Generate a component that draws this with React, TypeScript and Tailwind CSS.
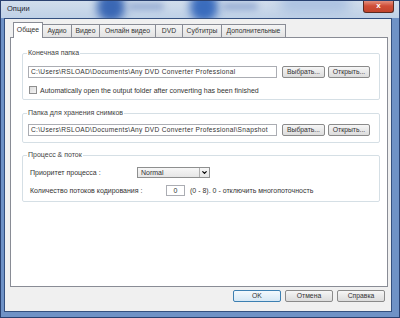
import { ChevronDown } from 'lucide-react';

const TABS = [
  { label: 'Общее', w: 'w-[30px]' },
  { label: 'Аудио', w: 'w-[30px]' },
  { label: 'Видео', w: 'w-[29px]' },
  { label: 'Онлайн видео', w: 'w-[57px]' },
  { label: 'DVD', w: 'w-[28px]' },
  { label: 'Субтитры', w: 'w-[40px]' },
  { label: 'Дополнительные', w: 'w-[65px]' },
];

const font = { fontFamily: '"Liberation Sans", Arial, sans-serif' };

function Btn({ children, w, primary }: { children: string; w: string; primary?: boolean }) {
  return (
    <div
      className={`${w} h-[12px] flex items-center justify-center rounded-[2px] border text-[6.8px] leading-none text-[#333] ${
        primary
          ? 'border-[#3c7fb1] bg-gradient-to-b from-[#f3f9fd] to-[#d6e8f5]'
          : 'border-[#8a8a8a] bg-gradient-to-b from-[#f6f6f6] to-[#dcdcdc]'
      }`}
    >
      {children}
    </div>
  );
}

function PathRow({ value }: { value: string }) {
  return (
    <div className="flex items-center pl-[5px]">
      <div className="w-[249px] h-[12px] border border-[#abadb3] bg-white flex items-center px-[2px] text-[6.6px] tracking-[0.3px] text-[#333] whitespace-nowrap overflow-hidden">
        {value}
      </div>
      <div className="ml-[5px]"><Btn w="w-[43px]">Выбрать...</Btn></div>
      <div className="ml-[3px]"><Btn w="w-[42px]">Открыть...</Btn></div>
    </div>
  );
}

function Group({ title, children, className }: { title: string; children: React.ReactNode; className?: string }) {
  return (
    <fieldset className={`border border-[#d5dfe5] rounded-[2px] ${className ?? ''}`}>
      <legend className="ml-[4px] px-[1px] text-[7px] leading-[8px] text-[#444]">{title}</legend>
      {children}
    </fieldset>
  );
}

export default function App() {
  return (
    <div style={font} className="w-[400px] h-[318px] relative overflow-hidden bg-[#6f92c6] border border-[#2a4170] flex flex-col">
      {/* glass title bar */}
      <div className="relative h-[18px] -mx-px -mt-px bg-gradient-to-b from-[#d2deec] to-[#bfd1e7] overflow-hidden shrink-0">
        <div className="absolute left-[97px] top-[-8px] w-[28px] h-[30px] rounded-full bg-[#3a67b4] blur-[4px]" />
        <div className="absolute left-[190px] top-[-8px] w-[28px] h-[30px] rounded-full bg-[#3a6cbd] blur-[4px]" />
        <div className="absolute left-[128px] top-[3px] w-[36px] h-[7px] rounded-full bg-[#96acd3] blur-[3px]" />
        <div className="absolute left-[222px] top-[3px] w-[36px] h-[7px] rounded-full bg-[#96acd3] blur-[3px]" />
        <div className="absolute left-[280px] top-[-4px] w-[70px] h-[16px] rounded-full bg-[#a9c0e0] blur-[6px]" />
        <span className="absolute left-[7px] top-[5px] text-[7.5px] leading-none text-[#1e2530]">Опции</span>
        <div className="absolute left-[363px] top-0 w-[31px] h-[13px] rounded-b-[3px] border border-t-0 border-[#5b2a22] bg-gradient-to-b from-[#e59a8a] via-[#cf4d37] to-[#c2442c] flex items-center justify-center">
          <span className="text-white text-[8px] font-bold leading-none">x</span>
        </div>
      </div>

      {/* client area */}
      <div className="flex-1 ml-[3px] mr-[7px] mb-[5px] bg-[#f0f0f0] border border-[#34507f] flex flex-col">
        {/* tabs */}
        <div className="flex items-end ml-[8px] mt-[3px] h-[15px] text-[6.8px] text-[#333]">
          {TABS.map((t, i) =>
            i === 0 ? (
              <div
                key={t.label}
                className={`${t.w} h-[16px] -mb-px relative z-10 bg-white border border-b-0 border-[#898c95] flex items-center justify-center`}
              >
                {t.label}
              </div>
            ) : (
              <div
                key={t.label}
                className={`${t.w} h-[13px] -ml-px bg-gradient-to-b from-[#f4f4f4] to-[#e3e3e3] border border-b-0 border-[#898c95] flex items-center justify-center whitespace-nowrap`}
              >
                {t.label}
              </div>
            )
          )}
        </div>

        {/* panel */}
        <div className="flex-1 ml-[5px] mr-[3px] bg-white border border-[#898c95] pl-[11px] pr-[7px] pt-[11px] flex flex-col text-[#333]">
          <Group title="Конечная папка" className="pb-[5px]">
            <div className="mt-[9px]">
              <PathRow value="C:\Users\RSLOAD\Documents\Any DVD Converter Professional" />
            </div>
            <div className="flex items-center mt-[8px] pl-[6px]">
              <div className="w-[8px] h-[8px] border border-[#8f8f8f] bg-gradient-to-br from-[#dcdcdc] to-[#f4f4f4]" />
              <span className="ml-[3px] text-[7px] leading-none">
                Automatically open the output folder after converting has been finished
              </span>
            </div>
          </Group>

          <Group title="Папка для хранения снимков" className="mt-[9px] pb-[6px]">
            <div className="mt-[7px]">
              <PathRow value="C:\Users\RSLOAD\Documents\Any DVD Converter Professional\Snapshot" />
            </div>
          </Group>

          <Group title="Процесс & поток" className="mt-[8px] pb-[5px]">
            <div className="flex items-center mt-[8px] pl-[7px] text-[7px] leading-none">
              <span className="w-[107px]">Приоритет процесса :</span>
              <div className="w-[73px] h-[11px] border border-[#8e8f8f] bg-gradient-to-b from-[#f7f7f7] to-[#e6e6e6] flex items-center">
                <span className="flex-1 pl-[3px]">Normal</span>
                <div className="w-[10px] h-full border-l border-[#b0b0b0] flex items-center justify-center">
                  <ChevronDown className="w-[7px] h-[7px] text-black" strokeWidth={4} />
                </div>
              </div>
            </div>
            <div className="flex items-center mt-[7px] pl-[7px] text-[7px] leading-none">
              <span className="w-[136px]">Количество потоков кодирования :</span>
              <div className="w-[19px] h-[11px] border border-[#abadb3] bg-white flex items-center justify-center">0</div>
              <span className="ml-[5px]">(0 - 8). 0 - отключить многопоточность</span>
            </div>
          </Group>
        </div>

        {/* buttons */}
        <div className="flex justify-end gap-[4px] mt-[3px] mb-[8px] mr-[6px] h-[13px]">
          <Btn w="w-[48px]" primary>OK</Btn>
          <Btn w="w-[48px]">Отмена</Btn>
          <Btn w="w-[48px]">Справка</Btn>
        </div>
      </div>
    </div>
  );
}
